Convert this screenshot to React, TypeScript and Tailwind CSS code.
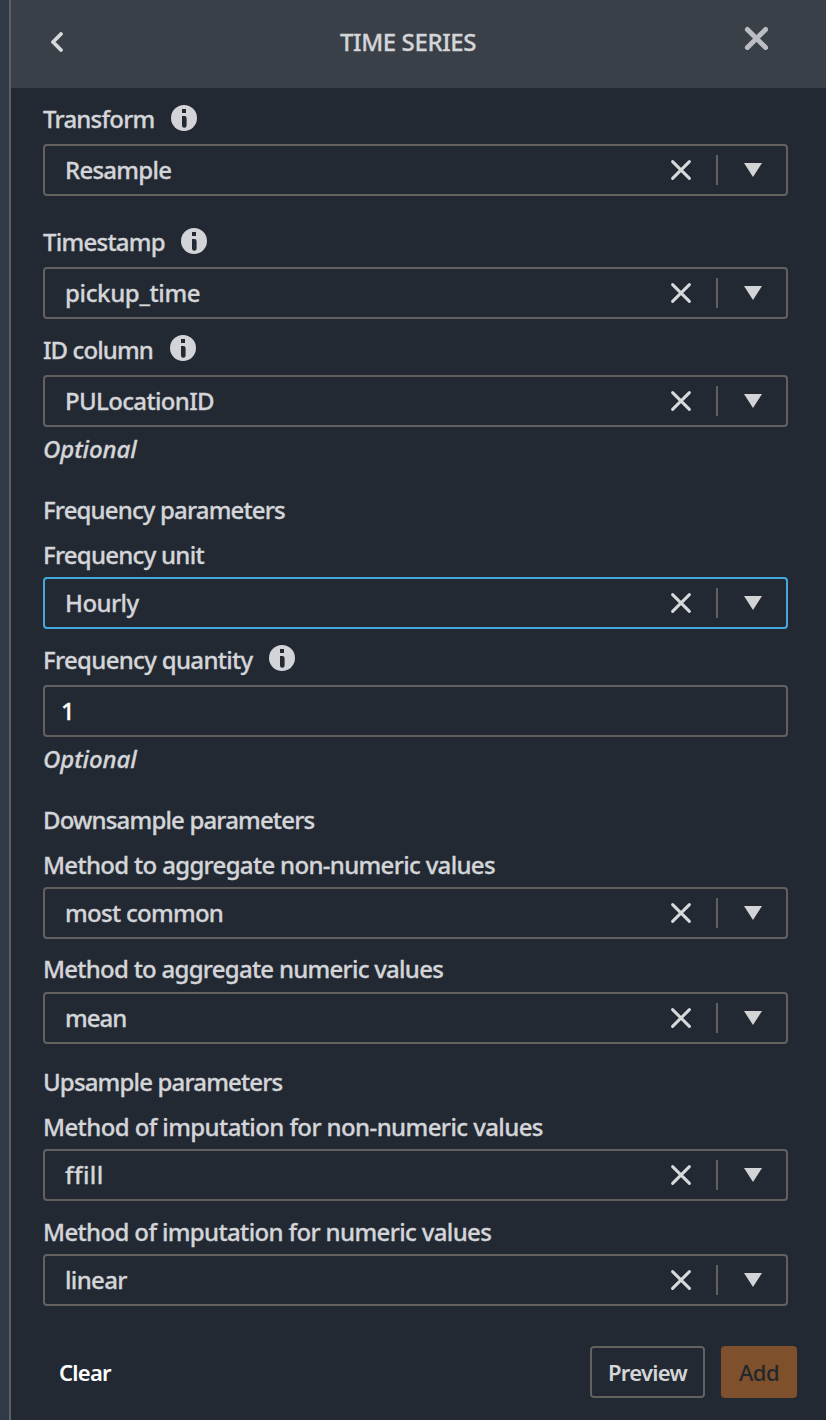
import React from "react";

function InfoIcon() {
  return (
    <svg width="26" height="26" viewBox="0 0 26 26" className="shrink-0">
      <circle cx="13" cy="13" r="13" fill="#d3d4d8" />
      <rect x="11" y="4" width="4" height="4" fill="#222933" />
      <path d="M11 11H13.4Q15.6 11 15.6 13.2V20.5A2.3 2.3 0 0 1 11 20.5Z" fill="#222933" />
    </svg>
  );
}

function Label({ text, size, info, className }: { text: string; size: string; info?: string; className: string }) {
  return (
    <div className={`flex h-8 items-center whitespace-nowrap leading-8 ${className}`}>
      <span className={size}>{text}</span>
      {info && <span className={`ml-4 ${info}`}><InfoIcon /></span>}
    </div>
  );
}

function Select({ value, size, active, className }: { value: string; size: string; active?: boolean; className: string }) {
  return (
    <div
      className={`flex h-[52px] w-[745px] items-center rounded-[4px] border-2 pl-5 ${active ? "border-[#44a8df]" : "border-[#62615f]"} ${className}`}
    >
      <span className={`whitespace-nowrap leading-8 ${size}`}>{value}</span>
      <svg width="22" height="22" viewBox="0 0 22 22" className="ml-auto shrink-0">
        <path d="M2.6 2.6L19.4 19.4M19.4 2.6L2.6 19.4" stroke="#d8d9da" strokeWidth="3" strokeLinecap="round" />
      </svg>
      <span className="ml-6 h-[30px] w-0.5 shrink-0 bg-[#62615f]" />
      <svg width="18" height="14" viewBox="0 0 18 14" className="mr-6 ml-[26px] shrink-0">
        <path d="M0 0H18L9 14Z" fill="#d3d4d6" />
      </svg>
    </div>
  );
}

export default function App() {
  return (
    <div className="flex h-[1420px] w-[826px] overflow-hidden bg-[#303a49] pl-[9px] font-['Noto_Sans',sans-serif] text-[24px] font-medium text-[#d4d5d8] [-webkit-text-stroke:0.3px]">
      <div className="flex w-[817px] flex-col border-l-2 border-[#605f60] bg-[#222933]">
        <header className="flex h-[88px] shrink-0 items-center bg-[#394048] pl-[39px]">
          <svg width="14" height="20" viewBox="0 0 14 20" className="-mt-1 shrink-0">
            <path d="M11 2L3 10L11 18" fill="none" stroke="#d8d9da" strokeWidth="3.8" strokeLinecap="round" strokeLinejoin="round" />
          </svg>
          <h1 className="-mt-1 ml-[276px] w-[136px] text-[24px] leading-8 tracking-[-0.4px] whitespace-nowrap">TIME SERIES</h1>
          <svg width="24" height="24" viewBox="0 0 24 24" className="-mt-3 ml-[268px] shrink-0">
            <path d="M3.4 3.4L21.6 21.6M21.6 3.4L3.4 21.6" stroke="#bcbdc3" strokeWidth="5" strokeLinecap="round" />
          </svg>
        </header>

        <main className="flex flex-col pl-8">
          <Label text="Transform" size="w-[112px] tracking-[-0.78px]" info="-mt-0.5" className="mt-[15px]" />
          <Select value="Resample" size="tracking-[-0.75px]" className="mt-[9px]" />

          <Label text="Timestamp" size="w-[122px] tracking-[-0.75px]" info="-mt-0.5" className="mt-[30px]" />
          <Select value="pickup_time" size="tracking-[-0.35px]" className="mt-[9px]" />

          <Label text="ID column" size="w-[111px] tracking-[-0.9px]" info="-mt-1" className="mt-[15px]" />
          <Select value="PULocationID" size="tracking-[-0.65px]" className="mt-[9px]" />
          <Label text="Optional" size="italic tracking-[-0.1px]" className="mt-1.5" />

          <Label text="Frequency parameters" size="tracking-[-0.85px]" className="mt-[29px]" />
          <Label text="Frequency unit" size="tracking-[-0.75px]" className="mt-[13px]" />
          <Select value="Hourly" size="tracking-[-0.55px]" active className="mt-1.5" />

          <Label text="Frequency quantity" size="w-[210px] tracking-[-0.68px]" info="-mt-1" className="mt-[15px]" />
          <div className="mt-[9px] flex h-[52px] w-[745px] items-center rounded-[4px] border-2 border-[#62615f] pl-4 text-white">1</div>
          <Label text="Optional" size="italic tracking-[-0.1px]" className="mt-1.5" />

          <Label text="Downsample parameters" size="tracking-[-0.84px]" className="mt-[29px]" />
          <Label text="Method to aggregate non-numeric values" size="tracking-[-0.68px]" className="mt-[13px]" />
          <Select value="most common" size="tracking-[-0.72px]" className="mt-1.5" />
          <Label text="Method to aggregate numeric values" size="tracking-[-0.74px]" className="mt-3.5" />
          <Select value="mean" size="tracking-[-1px]" className="mt-[7px]" />

          <Label text="Upsample parameters" size="tracking-[-0.84px]" className="mt-[22px]" />
          <Label text="Method of imputation for non-numeric values" size="tracking-[-0.6px]" className="mt-[13px]" />
          <Select value="ffill" size="tracking-[0.4px]" className="mt-1.5" />
          <Label text="Method of imputation for numeric values" size="tracking-[-0.64px]" className="mt-[15px]" />
          <Select value="linear" size="tracking-[-0.65px]" className="mt-1.5" />
        </main>

        <footer className="mt-10 flex h-[52px] items-center pr-[29px] pl-12 text-[22px] [-webkit-text-stroke:0px]">
          <button className="font-semibold tracking-[-0.75px] text-white">Clear</button>
          <button className="ml-auto h-[52px] w-[115px] rounded-[4px] border-2 border-[#62615f] font-semibold tracking-[-0.7px] whitespace-nowrap">Preview</button>
          <button className="ml-4 h-[52px] w-[76px] rounded-[4px] bg-[#7e502b] tracking-[-0.5px] text-[#22272e]">Add</button>
        </footer>
      </div>
    </div>
  );
}
